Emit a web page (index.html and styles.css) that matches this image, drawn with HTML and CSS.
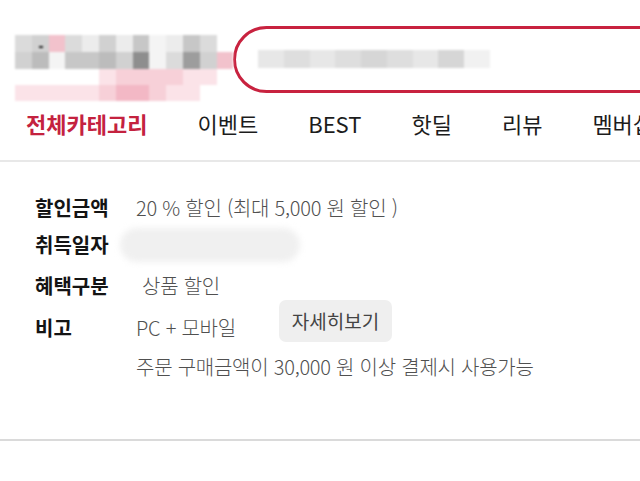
FILE: index.html
```html
<!DOCTYPE html>
<html lang="ko">
<head>
<meta charset="utf-8">
<title>쿠폰 상세</title>
<link rel="stylesheet" href="styles.css">
</head>
<body>
<header class="top">
  <div class="logo" aria-label="로고">
    <div class="px-grid">
      <span class="g2"></span><span class="g3 tick"></span><span class="pk"></span><span class="g2"></span><span class="g1"></span><span class="g3"></span><span class="g1"></span><span class="g4"></span><span class="g0"></span><span class="g1"></span><span class="g4"></span><span class="g2"></span><span class="w"></span>
      <span class="g3"></span><span class="g5"></span><span class="g0"></span><span class="g4"></span><span class="g4"></span><span class="g5"></span><span class="g3"></span><span class="g7"></span><span class="g0"></span><span class="g2"></span><span class="g6"></span><span class="g3"></span><span class="pk"></span>
      <span class="w"></span><span class="w"></span><span class="w"></span><span class="w"></span><span class="w"></span><span class="p1"></span><span class="p2"></span><span class="p2"></span><span class="p2"></span><span class="p2"></span><span class="p1"></span><span class="p1"></span><span class="w"></span>
      <span class="p1"></span><span class="p1"></span><span class="p1"></span><span class="p1"></span><span class="p1"></span><span class="p2"></span><span class="p3"></span><span class="p3"></span><span class="p2"></span><span class="p1"></span><span class="p1"></span><span class="w"></span><span class="w"></span>
    </div>
  </div>
  <div class="search">
    <div class="search-blur">
      <span class="b1"></span><span class="b2"></span><span class="b1"></span><span class="b2"></span><span class="b3"></span><span class="b2"></span><span class="b1"></span><span class="b3"></span><span class="b0"></span>
    </div>
  </div>
</header>

<nav class="gnb">
  <a class="gnb-item is-active">전체카테고리</a>
  <a class="gnb-item">이벤트</a>
  <a class="gnb-item">BEST</a>
  <a class="gnb-item">핫딜</a>
  <a class="gnb-item">리뷰</a>
  <a class="gnb-item">멤버십</a>
</nav>

<section class="coupon">
  <dl class="info">
    <dt class="r1">할인금액</dt>
    <dd class="r1">20 % 할인 (최대 5,000 원 할인 )</dd>
    <dt class="r2">취득일자</dt>
    <dd class="r2"><span class="date-blur"></span></dd>
    <dt class="r3">혜택구분</dt>
    <dd class="r3 indent">상품 할인</dd>
    <dt class="r4">비고</dt>
    <dd class="r4 note-row"><span class="note-text">PC + 모바일</span><button class="more-btn" type="button">자세히보기</button></dd>
    <dd class="r5 extra">주문 구매금액이 30,000 원 이상 결제시 사용가능</dd>
  </dl>
</section>
</body>
</html>
```

FILE: styles.css
```css
* { box-sizing: border-box; }

html, body {
  margin: 0;
  padding: 0;
  background: #fff;
}

body {
  width: 640px;
  overflow: hidden;
  font-family: "Noto Sans CJK KR", "Noto Sans", sans-serif;
  color: #1c1c1c;
}

/* ---------- header ---------- */
.top {
  display: flex;
  align-items: flex-start;
  padding-top: 26px;
  height: 93px;
}

.logo {
  width: 233px;
  padding-left: 15px;
  padding-top: 9px;
  flex: none;
}

.px-grid {
  display: grid;
  grid-template-columns: repeat(13, 16.8px);
  grid-template-rows: 17px 17px 16px 16px;
  filter: blur(1px);
}

.px-grid span { display: block; position: relative; }
.px-grid .w  { background: #fff; }
.px-grid .g0 { background: #f4f4f4; }
.px-grid .g1 { background: #ececec; }
.px-grid .g2 { background: #dbdbdb; }
.px-grid .g3 { background: #d1d1d1; }
.px-grid .g4 { background: #c7c7c7; }
.px-grid .g5 { background: #bcbcbc; }
.px-grid .g6 { background: #9d9d9d; }
.px-grid .g7 { background: #8e8e8e; }
.px-grid .pk { background: #f2c2cc; }
.px-grid .p1 { background: #fbe3e8; }
.px-grid .p2 { background: #f7d0d8; }
.px-grid .p3 { background: #f3b8c5; }
.px-grid .tick::after {
  content: "";
  position: absolute;
  left: 7px;
  top: 11px;
  width: 4px;
  height: 2px;
  background: #222;
}

.search {
  flex: none;
  width: 480px;
  height: 67px;
  border: 3px solid #c8223f;
  border-radius: 34px;
  padding: 21px 0 0 22px;
}

.search-blur {
  display: flex;
  width: 232px;
  height: 18px;
  filter: blur(1px);
}
.search-blur span { flex: 1; }
.search-blur .b0 { background: #f1f1f1; }
.search-blur .b1 { background: #e7e7e7; }
.search-blur .b2 { background: #dedede; }
.search-blur .b3 { background: #d6d6d6; }

/* ---------- nav ---------- */
.gnb {
  display: flex;
  gap: 50px;
  padding-left: 26px;
  margin-top: 10px;
  height: 59px;
  line-height: 40px;
  border-bottom: 2px solid #e8e8e8;
  white-space: nowrap;
}

.gnb-item {
  font-size: 22px;
  color: #1c1c1c;
}

.gnb-item.is-active {
  color: #c4223f;
  font-weight: 700;
}

/* ---------- coupon info ---------- */
.coupon {
  padding: 27px 0 53px 35px;
  border-bottom: 2px solid #dadada;
}

.info {
  display: grid;
  grid-template-columns: 101px 1fr;
  grid-template-rows: 37px 37px 45px 39px 39px;
  align-items: center;
  margin: 0;
}

.info dt {
  grid-column: 1;
  font-size: 20px;
  font-weight: 700;
  color: #141414;
}

.info dd {
  grid-column: 2;
  margin: 0;
  font-size: 20px;
  font-weight: 300;
  color: #505050;
  letter-spacing: -0.25px;
  white-space: nowrap;
}

.info .r1 { grid-row: 1; }
.info .r2 { grid-row: 2; }
.info .r3 { grid-row: 3; }
.info .r4 { grid-row: 4; }
.info .r5 { grid-row: 5; }

.info .indent { padding-left: 6px; }

.date-blur {
  display: block;
  width: 180px;
  height: 34px;
  margin-left: -16px;
  border-radius: 17px;
  background: #f0f0f0;
  filter: blur(3px);
}

.note-row {
  display: flex;
  align-items: center;
}

.note-text {
  width: 143px;
}

.more-btn {
  width: 113px;
  height: 42px;
  margin-bottom: 14px;
  border: 0;
  border-radius: 7px;
  background: #efefef;
  color: #444;
  font-family: inherit;
  font-size: 19px;
  font-weight: 400;
  padding: 0;
}
```
